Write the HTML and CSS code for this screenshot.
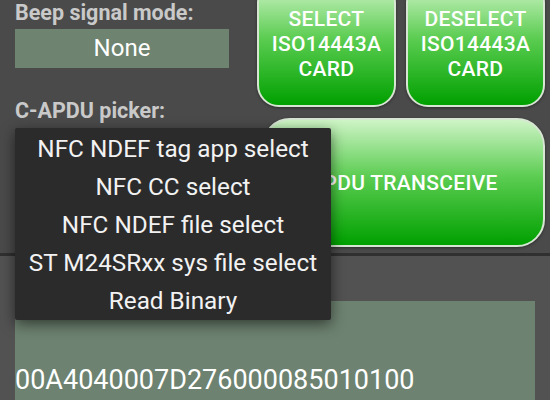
FILE: index.html
```html
<!DOCTYPE html>
<html lang="en">
<head>
    <meta charset="UTF-8">
    <meta name="viewport" content="width=device-width, initial-scale=1.0">
    <title>APDU</title>
    <link rel="stylesheet" href="styles.css">
</head>
<body>
    <div class="screen">
        <div class="top">
            <div class="settings">
                <div class="label">Beep signal mode:</div>
                <div class="spinner">None</div>
                <div class="label picker-label">C-APDU picker:</div>
                <div class="spinner picker"></div>
            </div>
            <div class="actions">
                <div class="card-buttons">
                    <button class="btn small">SELECT<br>ISO14443A<br>CARD</button>
                    <button class="btn small">DESELECT<br>ISO14443A<br>CARD</button>
                </div>
                <button class="btn big">APDU TRANSCEIVE</button>
            </div>
        </div>
        <div class="bottom">
            <div class="hexbox">00A4040007D276000085010100</div>
        </div>
        <ul class="popup">
            <li>NFC NDEF tag app select</li>
            <li>NFC CC select</li>
            <li>NFC NDEF file select</li>
            <li>ST M24SRxx sys file select</li>
            <li>Read Binary</li>
        </ul>
    </div>
</body>
</html>
```
FILE: styles.css
```css
body{
    margin: 0;
    background-color: #4a4a4a;
    font-family: Roboto, "Noto Sans", sans-serif;
    overflow: hidden;
}

.screen{
    position: relative;
    width: 550px;
    height: 400px;
    overflow: hidden;
}

.top{
    display: flex;
    gap: 28px;
    padding: 0 5px 6px 15px;
    height: 247px;
    border-bottom: 3px solid #303030;
}

.settings{
    width: 214px;
}

.label{
    font-size: 21.5px;
    font-weight: bold;
    color: #c9c9c9;
    line-height: 24px;
    padding-top: 1px;
    height: 28px;
}

.picker-label{
    margin-top: 30px;
}

.spinner{
    height: 39px;
    background-color: #6e8370;
    color: #fff;
    font-size: 24px;
    line-height: 39px;
    text-align: center;
}

.picker{
    margin-top: 8px;
}

.actions{
    width: 288px;
    margin-top: -19px;
    display: flex;
    flex-direction: column;
    gap: 11px;
}

.card-buttons{
    display: grid;
    grid-template-columns: 1fr 1fr;
    gap: 10px;
    height: 126px;
}

.btn{
    font-family: Roboto, sans-serif;
    font-weight: 500;
    color: #fff;
    border: 2px solid #d6e6d2;
    background: linear-gradient(#cef4c6, #5ccd52 45%, #00a000);
    box-shadow: 0 1px 3px rgba(0,0,0,0.4);
    padding: 0;
    letter-spacing: 0.3px;
}

.small{
    border-radius: 22px;
    font-size: 21px;
    line-height: 25px;
    padding-top: 0;
}

.big{
    height: 129px;
    margin-left: 5px;
    border-radius: 28px;
    font-size: 21px;
}

.bottom{
    background-color: #525252;
    height: 150px;
    padding: 45px 15px 0 15px;
}

.hexbox{
    background-color: #6d8270;
    color: #fff;
    font-size: 27px;
    line-height: 32px;
    padding-top: 63px;
    height: 100px;
}

.popup{
    position: absolute;
    left: 15px;
    top: 128px;
    width: 316px;
    margin: 0;
    padding: 2px 0 0 0;
    list-style: none;
    background-color: #2b2b2b;
    border-radius: 2px;
    box-shadow: 0 4px 14px rgba(0,0,0,0.55);
}

.popup li{
    height: 38px;
    line-height: 38px;
    text-align: center;
    font-size: 24.3px;
    color: #f2f2f2;
}
```
